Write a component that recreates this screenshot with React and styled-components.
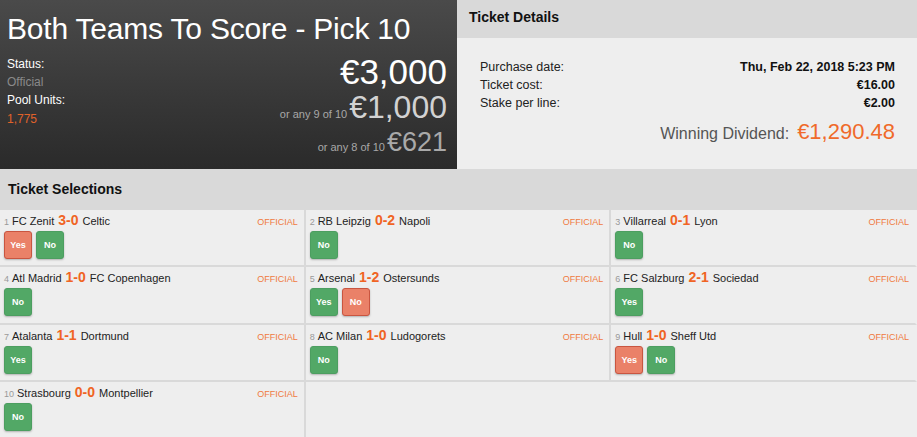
import React from 'react'
import styled, { createGlobalStyle } from 'styled-components';

const GlobalStyle = createGlobalStyle`
body{
    margin:0;
    background:#eeeeee;
    font-family:"Liberation Sans", Arial, sans-serif;
}
`;

const Page = styled.div`
width:917px;
height:437px;
overflow:hidden;
display:flex;
flex-direction:column;
background:#eeeeee;
`;

const Top = styled.div`
display:flex;
height:169px;
flex-shrink:0;
`;

const Hero = styled.div`
width:457px;
flex-shrink:0;
background:linear-gradient(to bottom, #4a4a4a 0%, #2a2a2a 100%);
padding:12px 10px 0 7px;
box-sizing:border-box;
color:#fff;
`;

const Title = styled.div`
font-size:30px;
letter-spacing:-0.2px;
line-height:34px;
white-space:nowrap;
`;

const HeroRow = styled.div`
display:flex;
justify-content:space-between;
margin-top:7px;
`;

const Info = styled.div`
padding-top:2px;
font-size:12px;
line-height:18.2px;
`;

const InfoValue = styled.div`
color:${({ $accent }) => $accent ? '#e0622a' : '#8a8a8a'};
`;

const Prizes = styled.div`
display:flex;
flex-direction:column;
align-items:flex-end;
`;

const Prize = styled.div`
font-size:${({ $size }) => $size}px;
color:${({ $color }) => $color};
line-height:${({ $lh }) => $lh}px;
white-space:nowrap;
`;

const PrizeNote = styled.span`
font-size:11px;
line-height:1;
color:#a8a8a8;
margin-right:2px;
`;

const Details = styled.div`
flex:1;
background:#eeeeee;
`;

const Bar = styled.div`
background:#d9d9d9;
font-size:14px;
font-weight:bold;
color:#111;
flex-shrink:0;
height:${({ $h }) => $h}px;
line-height:${({ $lh }) => $lh}px;
padding-left:${({ $pl }) => $pl}px;
`;

const DetailsBody = styled.div`
padding:20px 22px 0 23px;
`;

const DetailRow = styled.div`
display:flex;
justify-content:space-between;
font-size:12.5px;
line-height:18px;
color:#222;
`;

const DetailValue = styled.span`
font-weight:bold;
color:#111;
`;

const Dividend = styled.div`
display:flex;
justify-content:flex-end;
align-items:baseline;
gap:8px;
margin-top:7px;
line-height:26px;
`;

const DividendLabel = styled.span`
font-size:16px;
color:#555;
`;

const DividendValue = styled.span`
font-size:22px;
color:#f06a2a;
`;

const Grid = styled.div`
display:grid;
grid-template-columns:repeat(3, 1fr);
grid-auto-rows:57.3px;
background:#eeeeee;
`;

const Cell = styled.div`
border-right:2px solid #d9d9d9;
border-bottom:2px solid #d9d9d9;
padding:1px 6px 0 4px;
display:flex;
flex-direction:column;
gap:1px;
min-width:0;

&:nth-child(3n){
    border-right-color:#eeeeee;
}
`;

const CellHead = styled.div`
display:flex;
align-items:baseline;
height:19px;
line-height:19px;
white-space:nowrap;
`;

const Num = styled.span`
font-size:9px;
color:#999;
margin-right:3px;
`;

const Team = styled.span`
font-size:11px;
color:#222;
`;

const Score = styled.span`
font-size:14px;
font-weight:bold;
color:#f06424;
margin:0 4px;
`;

const Status = styled.span`
margin-left:auto;
font-size:9px;
color:#f07a3e;
`;

const Buttons = styled.div`
display:flex;
gap:4px;
`;

const Pick = styled.div`
width:28px;
height:28px;
box-sizing:border-box;
border-radius:3px;
display:flex;
align-items:center;
justify-content:center;
font-size:9px;
font-weight:bold;
color:#fff;
background:${({ $lost }) => $lost ? '#ea8168' : '#52a866'};
border:1px solid ${({ $lost }) => $lost ? '#c95540' : '#4c9e60'};
box-shadow:0 1px 2px rgba(0,0,0,0.25);
`;

const selections = [
    { n: 1, home: 'FC Zenit', score: '3-0', away: 'Celtic', picks: [['Yes', true], ['No', false]] },
    { n: 2, home: 'RB Leipzig', score: '0-2', away: 'Napoli', picks: [['No', false]] },
    { n: 3, home: 'Villarreal', score: '0-1', away: 'Lyon', picks: [['No', false]] },
    { n: 4, home: 'Atl Madrid', score: '1-0', away: 'FC Copenhagen', picks: [['No', false]] },
    { n: 5, home: 'Arsenal', score: '1-2', away: 'Ostersunds', picks: [['Yes', false], ['No', true]] },
    { n: 6, home: 'FC Salzburg', score: '2-1', away: 'Sociedad', picks: [['Yes', false]] },
    { n: 7, home: 'Atalanta', score: '1-1', away: 'Dortmund', picks: [['Yes', false]] },
    { n: 8, home: 'AC Milan', score: '1-0', away: 'Ludogorets', picks: [['No', false]] },
    { n: 9, home: 'Hull', score: '1-0', away: 'Sheff Utd', picks: [['Yes', true], ['No', false]] },
    { n: 10, home: 'Strasbourg', score: '0-0', away: 'Montpellier', picks: [['No', false]] },
];

const details = [
    ['Purchase date:', 'Thu, Feb 22, 2018 5:23 PM'],
    ['Ticket cost:', '€16.00'],
    ['Stake per line:', '€2.00'],
];

export default function App() {
    return (
        <Page>
            <GlobalStyle />
            <Top>
                <Hero>
                    <Title>Both Teams To Score - Pick 10</Title>
                    <HeroRow>
                        <Info>
                            <div>Status:</div>
                            <InfoValue>Official</InfoValue>
                            <div>Pool Units:</div>
                            <InfoValue $accent>1,775</InfoValue>
                        </Info>
                        <Prizes>
                            <Prize $size={35} $lh={37} $color="#ffffff">€3,000</Prize>
                            <Prize $size={32} $lh={35} $color="#d2d2d2">
                                <PrizeNote>or any 9 of 10</PrizeNote>€1,000
                            </Prize>
                            <Prize $size={27} $lh={35} $color="#a9a9a9">
                                <PrizeNote>or any 8 of 10</PrizeNote>€621
                            </Prize>
                        </Prizes>
                    </HeroRow>
                </Hero>
                <Details>
                    <Bar $h={38} $lh={34} $pl={12}>Ticket Details</Bar>
                    <DetailsBody>
                        {details.map(([label, value]) => (
                            <DetailRow key={label}>
                                <span>{label}</span>
                                <DetailValue>{value}</DetailValue>
                            </DetailRow>
                        ))}
                        <Dividend>
                            <DividendLabel>Winning Dividend:</DividendLabel>
                            <DividendValue>€1,290.48</DividendValue>
                        </Dividend>
                    </DetailsBody>
                </Details>
            </Top>
            <Bar $h={41} $lh={41} $pl={8}>Ticket Selections</Bar>
            <Grid>
                {selections.map((s) => (
                    <Cell key={s.n}>
                        <CellHead>
                            <Num>{s.n}</Num>
                            <Team>{s.home}</Team>
                            <Score>{s.score}</Score>
                            <Team>{s.away}</Team>
                            <Status>OFFICIAL</Status>
                        </CellHead>
                        <Buttons>
                            {s.picks.map(([label, lost]) => (
                                <Pick key={label} $lost={lost}>{label}</Pick>
                            ))}
                        </Buttons>
                    </Cell>
                ))}
            </Grid>
        </Page>
    )
}
